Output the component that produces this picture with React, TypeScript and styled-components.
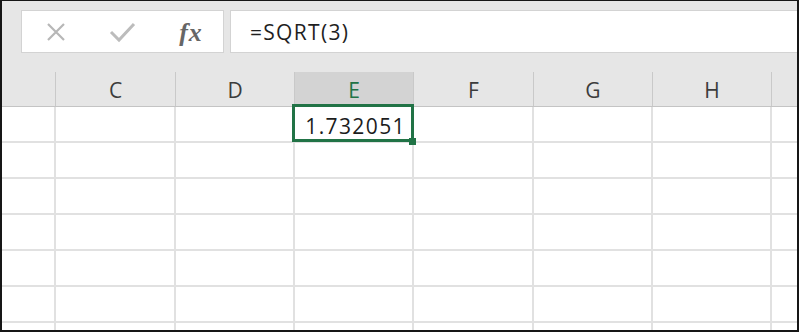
import React from 'react';
import styled, {createGlobalStyle} from 'styled-components';

const GlobalStyle = createGlobalStyle`
  html, body {
    margin: 0;
    padding: 0;
    background: #fff;
  }
  body {
    font-family: "Open Sans", "Liberation Sans", sans-serif;
  }
`;

const COLUMNS = '54px 120px 119px 119px 120px 119px 119px 1fr';
const GREEN = '#217346';
const GRID_LINE = '#e1e1e1';

const Frame = styled.div`
  width: 799px;
  height: 332px;
  box-sizing: border-box;
  border: 2px solid #161616;
  border-top-width: 1px;
  background: #fff;
  overflow: hidden;
  display: flex;
  flex-direction: column;
  & > * {
    flex-shrink: 0;
  }
`;

const Toolbar = styled.div`
  background: #e6e6e6;
  padding: 9px 0 19px 19px;
  display: flex;
  gap: 6px;
`;

const ButtonBox = styled.div`
  width: 203px;
  height: 43px;
  box-sizing: border-box;
  border: 1px solid #d3d3d3;
  background: #fff;
  display: flex;
  align-items: center;
  padding-left: 1px;
`;

const IconSlot = styled.div`
  width: 66px;
  height: 100%;
  display: flex;
  align-items: center;
  justify-content: center;
`;

const FxLabel = styled.span`
  font-family: "Liberation Serif", "DejaVu Serif", serif;
  font-style: italic;
  font-weight: bold;
  font-size: 26px;
  color: #666;
  letter-spacing: 1px;
  line-height: 1;
  margin: 2px 0 0 6px;
`;

const FormulaBox = styled.div`
  flex: 1;
  height: 43px;
  box-sizing: border-box;
  border: 1px solid #d3d3d3;
  border-right: none;
  background: #fff;
  display: flex;
  align-items: center;
  padding-left: 19px;
  font-size: 21px;
  letter-spacing: 1.3px;
  color: #1f1f1f;
`;

const HeaderRow = styled.div`
  display: grid;
  grid-template-columns: ${COLUMNS};
  height: 35px;
  box-sizing: border-box;
  background: #e6e6e6;
  border-bottom: 1px solid #c4c4c4;
`;

const HeaderCell = styled.div<{$selected?: boolean; $last?: boolean}>`
  display: flex;
  align-items: center;
  justify-content: center;
  font-size: 21px;
  color: ${p => (p.$selected ? GREEN : '#3c3c3c')};
  background: ${p => (p.$selected ? '#d3d3d3' : 'transparent')};
  border-right: ${p => (p.$last ? 'none' : '1px solid #c9c9c9')};
  padding-top: 1px;
`;

const Row = styled.div`
  display: grid;
  grid-template-columns: ${COLUMNS};
  height: 36px;
`;

const Cell = styled.div<{$last?: boolean; $active?: boolean}>`
  position: ${p => (p.$active ? 'relative' : 'static')};
  z-index: ${p => (p.$active ? 1 : 'auto')};
  box-sizing: border-box;
  border-bottom: 2px solid ${GRID_LINE};
  border-right: ${p => (p.$last ? 'none' : `2px solid ${GRID_LINE}`)};
  display: flex;
  align-items: center;
  justify-content: flex-end;
  padding: 3px 6px 0 0;
  font-size: 21px;
  letter-spacing: 1.4px;
  color: #1c1c1c;
`;

const Selection = styled.div`
  position: absolute;
  top: -3px;
  left: -3px;
  right: -2px;
  bottom: -1px;
  border: 3px solid ${GREEN};
  pointer-events: none;
`;

const FillHandle = styled.div`
  position: absolute;
  right: -4px;
  bottom: -4px;
  width: 7px;
  height: 7px;
  background: ${GREEN};
`;

const CancelIcon = () => (
  <svg width="20" height="20" viewBox="0 0 20 20">
    <path d="M2 2 L18 18 M18 2 L2 18" stroke="#b7b7b7" strokeWidth="2.2" fill="none"/>
  </svg>
);

const EnterIcon = () => (
  <svg width="27" height="22" viewBox="0 0 27 22">
    <path d="M2 11 L10 19 L25 3" stroke="#bcbcbc" strokeWidth="3" fill="none"/>
  </svg>
);

const headers = ['', 'C', 'D', 'E', 'F', 'G', 'H', ''];
const SELECTED_COL = 3;
const ROW_COUNT = 7;

export default function App() {
  return <>
    <GlobalStyle/>
    <Frame>
      <Toolbar>
        <ButtonBox>
          <IconSlot><CancelIcon/></IconSlot>
          <IconSlot><EnterIcon/></IconSlot>
          <IconSlot><FxLabel>fx</FxLabel></IconSlot>
        </ButtonBox>
        <FormulaBox>=SQRT(3)</FormulaBox>
      </Toolbar>
      <HeaderRow>
        {headers.map((label, i) => <HeaderCell
          key={i}
          $selected={i === SELECTED_COL}
          $last={i === headers.length - 1}>
          {label}
        </HeaderCell>)}
      </HeaderRow>
      {Array.from({length: ROW_COUNT}).map((_, row) => {
        return <Row key={row}>
          {headers.map((_, col) => {
            const active = row === 0 && col === SELECTED_COL;
            return <Cell key={col} $active={active} $last={col === headers.length - 1}>
              {active && <>
                1.732051
                <Selection/>
                <FillHandle/>
              </>}
            </Cell>;
          })}
        </Row>;
      })}
    </Frame>
  </>;
}
